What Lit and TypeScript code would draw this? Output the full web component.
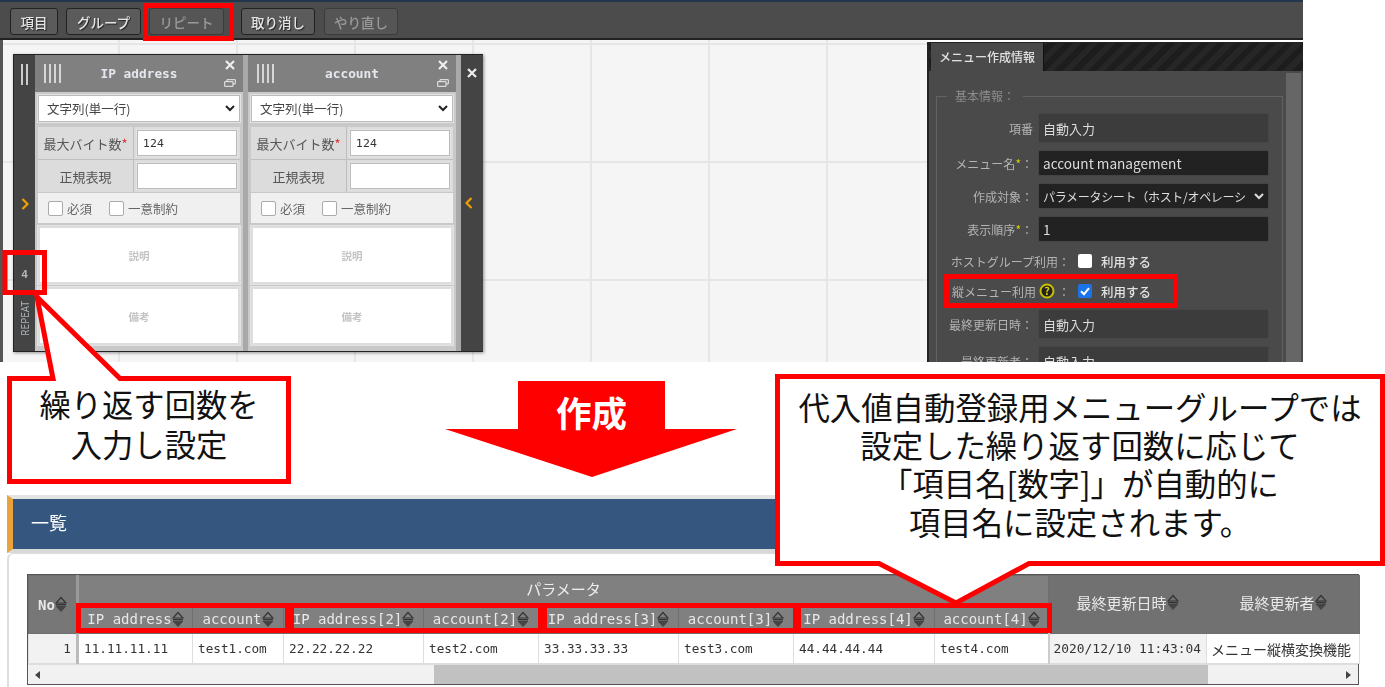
import { LitElement, css, html, svg } from 'lit';
import { customElement } from 'lit/decorators.js';

const sortIcon = html`
  <svg class="sort" viewBox="0 0 12 17" width="12" height="17" aria-hidden="true">
    <path d="M6 1.5 11 7H1Z" fill="none" stroke="currentColor" stroke-width="1.2" />
    <path d="M1 8.5h10" stroke="currentColor" stroke-width="1" />
    <path d="M6 15.5 11 10H1Z" fill="#444" stroke="#444" stroke-width="1" />
  </svg>
`;

const closeIcon = html`
  <svg viewBox="0 0 10 10" width="10" height="10" aria-hidden="true">
    <path d="M1 1l8 8M9 1l-8 8" stroke="#eee" stroke-width="2.2" />
  </svg>
`;

const copyIcon = html`
  <svg viewBox="0 0 12 8" width="12" height="8" aria-hidden="true">
    <path d="M3 2.5V.7h8.3v4.2H9M.7 2.7H9v4.6H.7Z" fill="none" stroke="#eee" stroke-width="1" />
  </svg>
`;

const chevron = (dir: 'left' | 'right') => html`
  <svg viewBox="0 0 8 12" width="8" height="12" aria-hidden="true">
    <path d=${dir === 'right' ? 'M1.5 1l5 5-5 5' : 'M6.5 1l-5 5 5 5'} fill="none" stroke="#f0a000" stroke-width="2.2" />
  </svg>
`;

const selectArrow = html`
  <svg class="arrow" viewBox="0 0 10 7" width="10" height="7" aria-hidden="true">
    <path d="M1 1l4 4 4-4" fill="none" stroke="currentColor" stroke-width="2" />
  </svg>
`;

const subColumns = [
  ['IP address', 'account', '11.11.11.11', 'test1.com'],
  ['IP address[2]', 'account[2]', '22.22.22.22', 'test2.com'],
  ['IP address[3]', 'account[3]', '33.33.33.33', 'test3.com'],
  ['IP address[4]', 'account[4]', '44.44.44.44', 'test4.com'],
];

const colWidths = [49, 115, 91, 140, 115, 140, 115, 141, 114, 158, 153];

@customElement('app-root')
export class AppRoot extends LitElement {
  static styles = css`
    :host {
      display: block;
      position: relative;
      width: 1385px;
      height: 687px;
      overflow: hidden;
      background: #fff;
      font-family: "Noto Sans CJK JP", "Noto Sans", sans-serif;
    }

    .shot {
      filter: blur(0.45px);
    }

    /* upper screenshot */
    .top {
      display: flex;
      flex-direction: column;
      width: 1303px;
      height: 362px;
      overflow: hidden;
      border-top: 2px solid #24364c;
      box-sizing: border-box;
    }

    .toolbar {
      display: flex;
      align-items: flex-start;
      height: 38px;
      flex: none;
      padding: 6px 0 0 10px;
      box-sizing: border-box;
      background: #4c4c4c;
      border-bottom: 2px solid #222;
    }

    .tbtn {
      height: 27px;
      box-sizing: border-box;
      display: flex;
      align-items: center;
      justify-content: center;
      background: #5b5b5b;
      border: 1px solid #222;
      border-radius: 3px;
      color: #e4e4e4;
      font-size: 13.5px;
      font-weight: 500;
      text-shadow: 1px 1px 1px #222;
    }

    .tbtn.off {
      color: #999;
      border-color: #3c3c3c;
      background: #555;
      text-shadow: none;
    }

    .body {
      flex: 1;
      display: flex;
      min-height: 0;
    }

    .canvas {
      flex: 1;
      padding: 14px 0 0 10px;
      border-left: 3px solid #555;
      box-sizing: border-box;
      background-color: #f5f5f5;
      background-image:
        linear-gradient(#e6e6e6 2px, transparent 2px),
        linear-gradient(90deg, #e6e6e6 2px, transparent 2px);
      background-size: 118px 118px;
      background-position: -3px 3px;
    }

    /* repeat block */
    .block {
      display: flex;
      width: 470px;
      height: 298px;
      box-sizing: border-box;
      background: #a9a9a9;
      border: 1px solid #222;
      box-shadow: 1px 1px 3px rgba(0, 0, 0, 0.4);
    }

    .band {
      flex: none;
      width: 21px;
      background: #444;
      display: flex;
      flex-direction: column;
      align-items: center;
      color: #bbb;
    }

    .band.right {
      width: 22px;
      margin-left: 5px;
    }

    .grip {
      display: flex;
      gap: 3px;
      margin-top: 9px;
      height: 21px;
    }

    .grip i {
      width: 2px;
      background: #ccc;
    }

    .band .chev {
      margin-top: 106px;
    }

    .band.right .close {
      margin-top: 4px;
      height: 10px;
    }

    .band.right .chev {
      margin-top: 121px;
      margin-right: 6px;
    }

    .count {
      margin-top: 53px;
      font: 700 11px "Liberation Sans", sans-serif;
    }

    .repeat {
      margin-top: 21px;
      writing-mode: vertical-rl;
      transform: rotate(180deg);
      font: 10px "Noto Sans", sans-serif;
      line-height: 14px;
      color: #a9b4bb;
    }

    .col {
      flex: none;
      width: 208px;
      display: flex;
      flex-direction: column;
      background: #c9c9c9;
    }

    .col + .col {
      margin-left: 5px;
    }

    .col-head {
      height: 37px;
      flex: none;
      background: #808080;
      display: grid;
      grid-template-columns: 26px 1fr 26px;
      align-items: center;
    }

    .col-head .bars {
      display: flex;
      gap: 3px;
      margin-left: 9px;
    }

    .col-head .bars i {
      flex: none;
      width: 2px;
      height: 19px;
      background: #d6d6d6;
    }

    .col-head .name {
      text-align: center;
      font: 700 12.8px "DejaVu Sans Mono", monospace;
      color: #e4e8ee;
    }

    .col-head .tools {
      display: flex;
      flex-direction: column;
      align-items: center;
      gap: 9px;
    }

    .field {
      background: #fff;
      border: 1px solid #bbb;
      outline: 1px solid #e3e3e3;
      box-sizing: border-box;
    }

    .sel {
      margin: 3px 3px 0;
      height: 27px;
      display: flex;
      align-items: center;
      justify-content: space-between;
      padding: 0 4px 0 8px;
      font-size: 12.5px;
      color: #444;
    }

    .sel svg {
      color: #222;
    }

    .pair {
      margin: 5px 3px 0;
      display: grid;
      grid-template-columns: 95px 1fr;
      grid-template-rows: 32px 32px;
      gap: 1px;
      background: #bfbfbf;
    }

    .pair .lab {
      background: #dcdcdc;
      display: flex;
      align-items: center;
      justify-content: center;
      font-size: 13px;
      color: #555;
    }

    .pair .lab b {
      color: #d33;
      font-weight: 400;
    }

    .pair .val {
      background: #dcdcdc;
      padding: 3px;
      display: flex;
    }

    .pair .val .field {
      flex: 1;
      padding: 6px 0 0 5px;
      font: 11px "DejaVu Sans", sans-serif;
      color: #333;
    }

    .checks {
      margin: 1px 3px 0;
      height: 30px;
      flex: none;
      background: #f0f0f0;
      display: flex;
      align-items: center;
      padding-left: 10px;
      font-size: 12.5px;
      color: #666;
    }

    .checks span {
      width: 13px;
      height: 13px;
      margin-right: 4px;
      background: #fff;
      border: 1px solid #aaa;
      border-radius: 2px;
    }

    .checks label + span {
      margin-left: 17px;
    }

    .memo {
      margin: 3px 3px 0;
      height: 58px;
      flex: none;
      display: flex;
      align-items: center;
      justify-content: center;
      font-size: 10.5px;
      font-weight: 700;
      color: #c4c4c4;
      border: 2px solid #ddd;
    }

    /* side panel */
    .panel {
      flex: none;
      width: 376px;
      background: #4a4a4a;
      border-left: 2px solid #222;
      box-sizing: border-box;
      overflow: hidden;
      display: flex;
      flex-direction: column;
      margin-top: 2px;
    }

    .tabs {
      flex: none;
      height: 29px;
      background: repeating-linear-gradient(135deg, #1d1d1d 0 6px, #262626 6px 12px);
      border-top: 1px solid #222;
      box-sizing: border-box;
      padding-left: 2px;
    }

    .tab {
      width: 113px;
      height: 28px;
      background: #4a4a4a;
      border-right: 1px solid #111;
      box-sizing: border-box;
      padding-left: 8px;
      font-size: 12px;
      font-weight: 500;
      line-height: 28px;
      color: #e0e0e0;
    }

    .panel-main {
      flex: 1;
      display: flex;
      min-height: 0;
    }

    .form {
      flex: 1;
      padding: 25px 3px 0 7px;
    }

    .fieldset {
      border: 1px solid #626262;
      padding: 16px 13px 0 0;
      position: relative;
      display: flex;
      flex-direction: column;
    }

    .legend {
      position: absolute;
      top: -9px;
      left: 10px;
      padding: 0 8px;
      background: #4a4a4a;
      font-size: 12px;
      line-height: 16px;
      color: #8c8c8c;
    }

    .row {
      display: flex;
      align-items: center;
      justify-content: flex-end;
      margin-bottom: 7px;
    }

    .row .lab {
      font-size: 12px;
      color: #b4b4b4;
      white-space: nowrap;
    }

    .row .lab b {
      color: #d8d000;
      font-weight: 400;
    }

    .input {
      width: 231px;
      height: 26px;
      margin-left: 5px;
      box-sizing: border-box;
      background: #222;
      border: 1px solid #444;
      border-radius: 2px;
      padding: 0 4px;
      display: flex;
      align-items: center;
      justify-content: space-between;
      font-size: 13.6px;
      color: #ddd;
      white-space: nowrap;
      overflow: hidden;
    }

    .input .clip {
      flex: 1;
      min-width: 0;
      overflow: hidden;
      font-size: 12px;
      letter-spacing: -0.3px;
    }

    .input .arrow {
      flex: none;
      margin-left: 4px;
    }

    .input.auto {
      height: 30px;
      font-size: 13px;
      background: #3c3c3c;
      border-color: #474747;
    }

    .row.opt {
      justify-content: flex-start;
      height: 24px;
      margin: 0 0 6px;
      padding-left: 15px;
    }

    .row.opt .lab {
      width: 118px;
      text-align: right;
      display: flex;
      align-items: center;
      justify-content: flex-end;
      gap: 3px;
    }

    .row.opt .box {
      width: 14px;
      height: 14px;
      margin-left: 8px;
      background: #fff;
      border-radius: 2px;
      display: flex;
    }

    .row.opt .box.on {
      background: #1a73e8;
    }

    .row.opt .txt {
      margin-left: 9px;
      font-size: 12.5px;
      font-weight: 500;
      color: #e2e2e2;
    }

    .scroll {
      flex: none;
      width: 15px;
      margin-top: 2px;
      margin-right: 2px;
      background: #666;
    }

    /* lower screenshot */
    .bottom {
      margin-top: 133px;
      height: 192px;
      padding-left: 7px;
      box-sizing: border-box;
    }

    .title-bar {
      height: 58px;
      box-sizing: border-box;
      width: 1353px;
      border-top: 4px solid #e4e4e4;
      border-bottom: 4px solid #d9d9d9;
      background: #34567f;
      border-left: 6px solid #e8a33d;
      padding: 0 0 4px 18px;
      display: flex;
      align-items: center;
      color: #fff;
      font-size: 18px;
    }

    .content {
      height: 134px;
      border-left: 2px solid #ddd;
      border-top: 1px solid #ddd;
      border-top-left-radius: 6px;
      padding: 20px 0 0 18px;
      box-sizing: border-box;
    }

    .grid {
      width: 1332px;
      height: 111px;
      box-sizing: border-box;
      border: 1px solid #555;
      display: flex;
      flex-direction: column;
    }

    table {
      border-collapse: collapse;
      table-layout: fixed;
      width: 1330px;
      flex: none;
      font-family: "DejaVu Sans Mono", monospace;
    }

    th {
      height: 29px;
      padding: 0;
      background: #808080;
      color: #eee;
      font-size: 14px;
      font-weight: 400;
      white-space: nowrap;
      border: 1px solid #6f6f6f;
      box-sizing: border-box;
    }

    th.jp {
      font-family: "Noto Sans CJK JP", sans-serif;
      font-size: 15px;
      font-weight: 400;
      padding-bottom: 4px;
    }

    th.dark {
      background: #717171;
    }

    th.no {
      background: #777;
      font-weight: 700;
      font-size: 14px;
      border-right: 3px solid #999;
    }

    th .in {
      display: inline-flex;
      align-items: center;
      color: #e8e8e8;
    }

    .sort {
      flex: none;
      color: #333;
    }

    td {
      height: 30px;
      padding: 0 0 0 5px;
      background: #fff;
      border: 1px solid #ddd;
      box-sizing: border-box;
      font-size: 12.7px;
      color: #333;
      white-space: nowrap;
      overflow: hidden;
    }

    td.num {
      text-align: right;
      padding-right: 5px;
      background: #f2f2f2;
      border-right: 3px solid #bbb;
    }

    td.stamp {
      background: #f2f2f2;
      border-left: 2px solid #ccc;
      padding-left: 4px;
      font-size: 12.9px;
    }

    td.who {
      font-family: "Noto Sans CJK JP", sans-serif;
      font-size: 14px;
      padding-left: 4px;
    }

    .bar {
      flex: 1;
      display: flex;
      align-items: center;
      background: #f1f1f1;
      padding: 0 7px;
      border-top: 1px solid #ddd;
    }

    .bar .thumb {
      flex: none;
      width: 774px;
      height: 100%;
      margin-left: 394px;
      margin-right: auto;
      background: #c1c1c1;
    }

    .tri-l,
    .tri-r {
      border: 4px solid transparent;
      width: 0;
      height: 0;
    }

    .tri-l {
      border-right: 5px solid #444;
      border-left: 0;
    }

    .tri-r {
      border-left: 5px solid #444;
      border-right: 0;
    }

    /* annotations drawn over both screenshots */
    .marks {
      position: absolute;
      inset: 0;
      pointer-events: none;
    }

    .note {
      position: absolute;
      text-align: center;
      color: #111;
      white-space: nowrap;
    }

    .note.small {
      left: 12px;
      top: 384px;
      width: 274px;
      line-height: 40px;
      font-size: 31.3px;
    }

    .note.big {
      left: 782px;
      top: 388px;
      width: 596px;
      line-height: 38.2px;
      font-size: 31.4px;
    }

    .make {
      position: absolute;
      left: 518px;
      top: 387px;
      width: 147px;
      text-align: center;
      font-size: 35.5px;
      line-height: 50px;
      font-weight: 700;
      color: #fff;
    }
  `;

  private renderColumn(name: string) {
    return html`
      <div class="col">
        <div class="col-head">
          <div class="bars"><i></i><i></i><i></i><i></i></div>
          <div class="name">${name}</div>
          <div class="tools">${closeIcon}${copyIcon}</div>
        </div>
        <div class="sel field"><span>文字列(単一行)</span>${selectArrow}</div>
        <div class="pair">
          <div class="lab">最大バイト数<b>*</b></div>
          <div class="val"><div class="field">124</div></div>
          <div class="lab">正規表現</div>
          <div class="val"><div class="field"></div></div>
        </div>
        <div class="checks">
          <span></span><label>必須</label>
          <span></span><label>一意制約</label>
        </div>
        <div class="memo field">説明</div>
        <div class="memo field">備考</div>
      </div>
    `;
  }

  private renderPanel() {
    return html`
      <div class="panel">
        <div class="tabs"><div class="tab">メニュー作成情報</div></div>
        <div class="panel-main">
          <div class="form">
            <div class="fieldset">
              <div class="legend">基本情報：</div>
              <div class="row">
                <span class="lab">項番</span><div class="input auto">自動入力</div>
              </div>
              <div class="row">
                <span class="lab">メニュー名<b>*</b>：</span><div class="input">account management</div>
              </div>
              <div class="row">
                <span class="lab">作成対象：</span>
                <div class="input"><span class="clip">パラメータシート（ホスト/オペレーシ</span>${selectArrow}</div>
              </div>
              <div class="row">
                <span class="lab">表示順序<b>*</b>：</span><div class="input">1</div>
              </div>
              <div class="row opt">
                <span class="lab">ホストグループ利用：</span><span class="box"></span><span class="txt">利用する</span>
              </div>
              <div class="row opt">
                <span class="lab">縦メニュー利用
                  <svg viewBox="0 0 16 16" width="16" height="16" aria-hidden="true">
                    <circle cx="8" cy="8" r="6.5" fill="#222" stroke="#c8c000" stroke-width="2" />
                    <text x="8" y="12" text-anchor="middle" font-size="11" font-weight="700" fill="#d8d000">?</text>
                  </svg>：</span>
                <span class="box on">
                  <svg viewBox="0 0 14 14" width="14" height="14" aria-hidden="true">
                    <path d="M3 7.2l3 3 5-6" fill="none" stroke="#fff" stroke-width="2" />
                  </svg>
                </span>
                <span class="txt">利用する</span>
              </div>
              <div class="row">
                <span class="lab">最終更新日時：</span><div class="input auto">自動入力</div>
              </div>
              <div class="row">
                <span class="lab">最終更新者：</span><div class="input auto">自動入力</div>
              </div>
            </div>
          </div>
          <div class="scroll"></div>
        </div>
      </div>
    `;
  }

  private renderTable() {
    return html`
      <div class="grid">
        <table>
          <colgroup>
            ${colWidths.map((w) => html`<col style="width:${w}px" />`)}
          </colgroup>
          <tr>
            <th class="no" rowspan="2"><span class="in">No${sortIcon}</span></th>
            <th class="jp" colspan="8">パラメータ</th>
            <th class="jp dark" rowspan="2"><span class="in">最終更新日時${sortIcon}</span></th>
            <th class="jp dark" rowspan="2"><span class="in">最終更新者${sortIcon}</span></th>
          </tr>
          <tr>
            ${subColumns.map(
              ([a, b]) => html`
                <th><span class="in">${a}${sortIcon}</span></th>
                <th><span class="in">${b}${sortIcon}</span></th>
              `,
            )}
          </tr>
          <tr>
            <td class="num">1</td>
            ${subColumns.map(([, , a, b]) => html`<td>${a}</td><td>${b}</td>`)}
            <td class="stamp">2020/12/10 11:43:04</td>
            <td class="who">メニュー縦横変換機能</td>
          </tr>
        </table>
        <div class="bar">
          <span class="tri-l"></span>
          <div class="thumb"></div>
          <span class="tri-r"></span>
        </div>
      </div>
    `;
  }

  private renderMarks() {
    const rects = [
      [145.5, 5.5, 86, 33],
      [5, 252.5, 39.5, 40],
      [946.5, 276.5, 229, 29],
      [78.5, 605.5, 209, 25],
      [291.5, 605.5, 249, 25],
      [544.5, 605.5, 251, 25],
      [798.5, 605.5, 251, 25],
    ];
    return html`
      <svg class="marks" width="1385" height="687" viewBox="0 0 1385 687" aria-hidden="true">
        ${rects.map(
          ([x, y, w, h]) =>
            svg`<rect x=${x} y=${y} width=${w} height=${h} fill="none" stroke="#f00" stroke-width="5" />`,
        )}
        <polygon
          points="9.5,378.5 53,378.5 37,297 120,378.5 288.5,378.5 288.5,481.5 9.5,481.5"
          fill="#fff"
          stroke="#f00"
          stroke-width="5"
        />
        <polygon
          points="777.5,376.5 1382.5,376.5 1382.5,563.5 1029,563.5 956,603 879,563.5 777.5,563.5"
          fill="#fff"
          stroke="#f00"
          stroke-width="5"
        />
        <polygon points="518,381 665,381 665,429 737,429 592,477 445,429 518,429" fill="#f00" />
      </svg>
      <div class="note small">繰り返す回数を<br />入力し設定</div>
      <div class="make">作成</div>
      <div class="note big">
        代入値自動登録用メニューグループでは<br />
        設定した繰り返す回数に応じて<br />
        「項目名[数字]」が自動的に<br />
        項目名に設定されます。
      </div>
    `;
  }

  render() {
    const buttons: [string, number, number, boolean][] = [
      ['項目', 48, 8, false],
      ['グループ', 75, 8, false],
      ['リピート', 75, 17, true],
      ['取り消し', 74, 9, false],
      ['やり直し', 74, 0, true],
    ];
    return html`
      <div class="top shot">
        <div class="toolbar">
          ${buttons.map(
            ([label, w, gap, off]) => html`
              <div class="tbtn ${off ? 'off' : ''}" style="width:${w}px;margin-right:${gap}px">${label}</div>
            `,
          )}
        </div>
        <div class="body">
          <div class="canvas">
            <div class="block">
              <div class="band">
                <div class="grip"><i></i><i></i></div>
                <div class="chev">${chevron('right')}</div>
                <div class="count">4</div>
                <div class="repeat">REPEAT</div>
              </div>
              ${this.renderColumn('IP address')} ${this.renderColumn('account')}
              <div class="band right">
                <div class="close">${closeIcon}</div>
                <div class="chev">${chevron('left')}</div>
              </div>
            </div>
          </div>
          ${this.renderPanel()}
        </div>
      </div>
      <div class="bottom shot">
        <div class="title-bar">一覧</div>
        <div class="content">${this.renderTable()}</div>
      </div>
      ${this.renderMarks()}
    `;
  }
}

declare global {
  interface HTMLElementTagNameMap {
    'app-root': AppRoot;
  }
}
